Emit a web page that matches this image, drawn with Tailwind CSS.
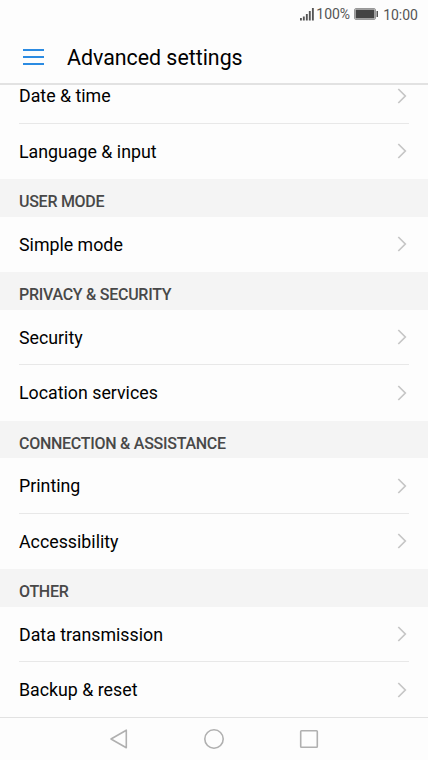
<!DOCTYPE html>
<html lang="en">
<head>
<meta charset="utf-8">
<title>Advanced settings</title>
<script src="https://cdn.jsdelivr.net/npm/@tailwindcss/browser@4"></script>
</head>
<body class="bg-[#fdfdfd]">
<svg class="hidden"><symbol id="chev" viewBox="0 0 10 16"><path d="M1.3 1 8.3 8 1.3 15" fill="none" stroke="#c6c6c6" stroke-width="1.7"/></symbol></svg>
<div class="w-[428px] h-[760px] flex flex-col overflow-hidden bg-[#fdfdfd] text-black font-[Roboto,sans-serif]">
  <div class="h-[30px] shrink-0 flex items-center justify-end pr-[10px] text-[14px] leading-[28px] text-[#555]">
    <svg class="w-[14px] h-[14px] mr-[2px] mb-[2px]" viewBox="0 0 15 14" preserveAspectRatio="none" fill="#555"><path d="M0 11h2v2.5H0zM3.1 9.5h2v4h-2zM6.3 7h2v6.5h-2zM9.5 4h2v9.5h-2zM12.8 1h2v12.5h-2z"/></svg>
    <span class="pb-[2px]">100%</span>
    <svg class="w-[24px] h-[12px] ml-[4px] mr-[5px] mb-[2px]" viewBox="0 0 24 12"><rect x=".5" y=".5" width="21" height="11" rx="1.5" fill="#fdfdfd" stroke="#999"/><rect x="1.5" y="1.5" width="19" height="9" fill="#444"/><path d="M22.5 3H24v6h-1.5z" fill="#555"/></svg>
    <span>10:00</span>
  </div>
  <div class="h-[55px] shrink-0 flex items-center pl-[23px] border-b-2 border-[#e2e2e2]">
    <svg class="w-[21px] h-[16px] mr-[23px] mt-px" viewBox="0 0 21 16" fill="#2b8be2"><path d="M0 0h21v2H0zM0 7h21v2H0zM0 14h21v2H0z"/></svg>
    <h1 class="text-[21.35px] leading-[30px] pt-[3px]">Advanced settings</h1>
  </div>
  <div class="flex-1 overflow-hidden">
    <div class="-mt-[17px] text-[17.8px] leading-[27px]">
      <div class="h-[55.5px] mx-[19px] pt-px pr-[2px] flex items-center justify-between border-b border-[#e8e8e8]"><span>Date &amp; time</span><svg class="w-[10px] h-4"><use href="#chev"/></svg></div>
      <div class="h-[55.5px] mx-[19px] pr-[2px] flex items-center justify-between"><span>Language &amp; input</span><svg class="w-[10px] h-4"><use href="#chev"/></svg></div>
      <div class="h-[37.5px] px-[19px] pt-[9px] flex items-center bg-[#f4f4f4] text-[16px] tracking-[-0.27px] leading-[24px] font-medium text-[#484848]">USER MODE</div>
      <div class="h-[55.5px] mx-[19px] pr-[2px] flex items-center justify-between"><span>Simple mode</span><svg class="w-[10px] h-4"><use href="#chev"/></svg></div>
      <div class="h-[37.5px] px-[19px] pt-[9px] flex items-center bg-[#f4f4f4] text-[16px] tracking-[-0.27px] leading-[24px] font-medium text-[#484848]">PRIVACY &amp; SECURITY</div>
      <div class="h-[55.5px] mx-[19px] pt-px pr-[2px] flex items-center justify-between border-b border-[#e8e8e8]"><span>Security</span><svg class="w-[10px] h-4"><use href="#chev"/></svg></div>
      <div class="h-[55.5px] mx-[19px] pr-[2px] flex items-center justify-between"><span>Location services</span><svg class="w-[10px] h-4"><use href="#chev"/></svg></div>
      <div class="h-[37.5px] px-[19px] pt-[9px] flex items-center bg-[#f4f4f4] text-[16px] tracking-[-0.27px] leading-[24px] font-medium text-[#484848]">CONNECTION &amp; ASSISTANCE</div>
      <div class="h-[55.5px] mx-[19px] pt-px pr-[2px] flex items-center justify-between border-b border-[#e8e8e8]"><span>Printing</span><svg class="w-[10px] h-4"><use href="#chev"/></svg></div>
      <div class="h-[55.5px] mx-[19px] pr-[2px] flex items-center justify-between"><span>Accessibility</span><svg class="w-[10px] h-4"><use href="#chev"/></svg></div>
      <div class="h-[37.5px] px-[19px] pt-[9px] flex items-center bg-[#f4f4f4] text-[16px] tracking-[-0.27px] leading-[24px] font-medium text-[#484848]">OTHER</div>
      <div class="h-[55.5px] mx-[19px] pt-px pr-[2px] flex items-center justify-between border-b border-[#e8e8e8]"><span>Data transmission</span><svg class="w-[10px] h-4"><use href="#chev"/></svg></div>
      <div class="h-[55.5px] mx-[19px] pt-px pr-[2px] flex items-center justify-between border-b border-[#dedede]"><span>Backup &amp; reset</span><svg class="w-[10px] h-4"><use href="#chev"/></svg></div>
    </div>
  </div>
  <div class="h-[43.5px] shrink-0 border-t border-[#e2e2e2] flex items-center justify-between pl-[109px] pr-[109px]">
    <svg class="w-[20px] h-[22px]" viewBox="0 0 20 22" fill="none" stroke="#b0b0b0" stroke-width="1.6" stroke-linejoin="round"><path d="M2 11 17.3 2.2v17.6z"/></svg>
    <svg class="w-[22px] h-[22px]" viewBox="0 0 22 22" fill="none" stroke="#b0b0b0" stroke-width="1.6"><circle cx="11" cy="11" r="9.2"/></svg>
    <svg class="w-[20px] h-[20px]" viewBox="0 0 20 20" fill="none" stroke="#b0b0b0" stroke-width="1.6"><rect x="1.7" y="1.7" width="16.6" height="16.6" rx=".8"/></svg>
  </div>
</div>
</body>
</html>
